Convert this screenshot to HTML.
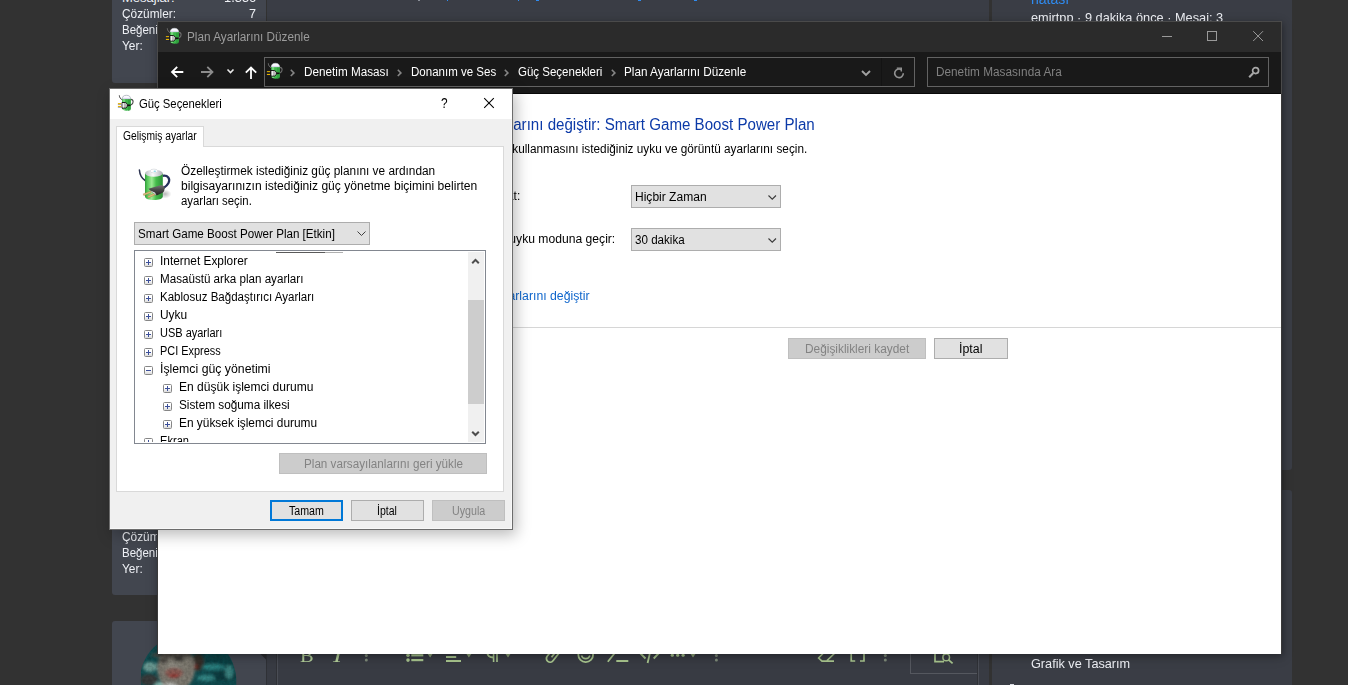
<!DOCTYPE html><html lang="tr"><head><meta charset="utf-8"><title>Plan Ayarlarını Düzenle</title><style>
*{box-sizing:border-box;margin:0;padding:0}
html,body{width:1348px;height:685px;overflow:hidden}
body{background:#323232;position:relative;font-family:"Liberation Sans",sans-serif;font-size:12px;color:#000}
.a{position:absolute}
.t{position:absolute;white-space:pre;line-height:1;transform-origin:0 50%}
svg{position:absolute;overflow:visible}
/* forum background */
.cell{background:#42464f}
.msg{background:#3a3d45}
/* window */
#win{left:157px;top:21px;width:1125px;height:633px;border:1px solid #4a4a4a;border-bottom:0;background:#fff;box-shadow:1px 2px 6px rgba(0,0,0,.26),0 3px 12px rgba(0,0,0,.16)}
#winl{left:157px;top:94px;width:1125px;height:560px;border-left:1px solid #3a3a3a;border-right:1px solid #3a3a3a}
#wtitle{left:158px;top:22px;width:1123px;height:30px;background:#2b2b2b}
#waddr{left:158px;top:52px;width:1123px;height:42px;background:#191919}
.abox{border:1px solid #626262;background:#191919}
/* dialog */
#dlg{left:109px;top:88px;width:404px;height:442px;border:1px solid rgba(0,0,0,.55);background:#f0f0f0;box-shadow:inset -1px -1px 0 #f8f8f8,3px 5px 14px rgba(0,0,0,.27)}
.btn{border:1px solid #adadad;background:#e1e1e1}
.btn.dis{border-color:#bfbfbf;background:#cccccc}
.combo{border:1px solid #adadad;background:#e1e1e1}
.pm{width:9px;height:9px;border:1px solid #868686;border-radius:1.500px;background:linear-gradient(180deg,#fff 40%,#dcdcdc)}
.pm i{position:absolute;left:1px;top:3px;width:5px;height:1px;background:#3c4f9a}
.pm b{position:absolute;left:3px;top:1px;width:1px;height:5px;background:#3c4f9a}
</style></head><body>
<div id="forum" aria-label="Forum sayfası">
<div class="a cell" style="left:112px;top:-20px;width:154px;height:103px;border-radius:0 0 0 3px"></div>
<div class="a msg" style="left:267px;top:-20px;width:722px;height:103px"></div>
<span class="t" style="left:122.00px;top:-9.00px;font-size:13px;color:#eef0f5;">Mesajlar:</span>
<span class="t" style="left:223.50px;top:-9.00px;font-size:13px;color:#eef0f5;transform:scaleX(0.9893);">1.356</span>
<span class="t" style="left:121.50px;top:7.00px;font-size:13px;color:#eef0f5;transform:scaleX(0.9114);">Çözümler:</span>
<span class="t" style="left:248.80px;top:7.00px;font-size:13px;color:#eef0f5;transform:scaleX(0.9676);">7</span>
<span class="t" style="left:121.50px;top:23.00px;font-size:13px;color:#eef0f5;transform:scaleX(0.8843);">Beğeni</span>
<span class="t" style="left:121.50px;top:39.00px;font-size:13px;color:#eef0f5;transform:scaleX(0.9137);">Yer:</span>
<div class="a" style="left:418px;top:0;width:2px;height:1px;background:#8a8f98"></div>
<div class="a" style="left:446.5px;top:0;width:1.5px;height:1px;background:#2f8bf0"></div>
<div class="a" style="left:517.5px;top:0;width:1.5px;height:1px;background:#2f8bf0"></div>
<div class="a" style="left:535.5px;top:0;width:3px;height:1px;background:#2f8bf0"></div>
<div class="a" style="left:637.5px;top:0;width:3px;height:1px;background:#2f8bf0"></div>
<div class="a" style="left:694px;top:0;width:3px;height:1px;background:#2f8bf0"></div>
<div class="a cell" style="left:112px;top:100px;width:154px;height:495px;border-radius:3px 0 0 3px"></div>
<span class="t" style="left:121.50px;top:530.00px;font-size:13px;color:#eef0f5;transform:scaleX(0.9114);">Çözümler:</span>
<span class="t" style="left:121.50px;top:546.00px;font-size:13px;color:#eef0f5;transform:scaleX(0.8843);">Beğeni</span>
<span class="t" style="left:121.50px;top:562.00px;font-size:13px;color:#eef0f5;transform:scaleX(0.9137);">Yer:</span>
<div class="a cell" style="left:112px;top:621px;width:154px;height:80px;border-radius:3px 0 0 0"></div>
<div class="a" style="left:266px;top:621px;width:723px;height:80px;background:#383b43;border-left:1px solid #2f3136"></div>
<div class="a" style="left:276px;top:621px;width:2px;height:80px;background:linear-gradient(90deg,#2f3136 50%,#4a4d55 50%)"></div>
<div class="a" style="left:977px;top:621px;width:2px;height:80px;background:linear-gradient(90deg,#2f3136 50%,#4a4d55 50%)"></div>
<svg class="a" style="left:260px;top:650px" width="6" height="10" viewBox="0 0 6 10"><path d="M0 3.500h6v6z" fill="#2b2c30"/></svg>
<svg class="a" style="left:141px;top:635px" width="96" height="96" viewBox="141 635 96 96"><defs><clipPath id="avc"><circle cx="188" cy="681.500" r="48.300"/></clipPath><filter id="avb" x="-20%" y="-20%" width="140%" height="140%"><feGaussianBlur stdDeviation="1.600"/></filter><filter id="avn"><feTurbulence type="fractalNoise" baseFrequency=".35" numOctaves="2" seed="4"/><feColorMatrix values="0 0 0 0 0  0 0 0 0 0  0 0 0 0 0  0 0 0 .28 0"/><feComposite in2="SourceGraphic" operator="in"/></filter></defs><g clip-path="url(#avc)"><rect x="141" y="635" width="96" height="96" fill="#125458"/><g filter="url(#avb)"><ellipse cx="218" cy="662" rx="16" ry="6" fill="#0b4a4d"/><ellipse cx="212" cy="667" rx="13" ry="3" fill="#2d8c8b"/><ellipse cx="224" cy="676" rx="12" ry="5" fill="#0a4144"/><ellipse cx="206" cy="678" rx="9" ry="3" fill="#3b9795"/><ellipse cx="229" cy="672" rx="4" ry="7" fill="#3f8f8c"/><ellipse cx="150" cy="667" rx="7" ry="5" fill="#76aaa3"/><ellipse cx="149" cy="680" rx="9" ry="6" fill="#3e4140"/><ellipse cx="160" cy="686" rx="6" ry="4" fill="#8fc5bc"/><ellipse cx="198" cy="662" rx="6" ry="9" fill="#3b362f"/><ellipse cx="176" cy="668" rx="19" ry="23" fill="#89857a"/><ellipse cx="172" cy="655" rx="21" ry="2.500" fill="#55504a"/><ellipse cx="174" cy="666" rx="8" ry="4" fill="#9a968b"/><ellipse cx="163" cy="660.500" rx="4.500" ry="1.800" fill="#35322e"/><ellipse cx="179" cy="659" rx="5" ry="1.800" fill="#2f2c29"/><ellipse cx="174" cy="673" rx="9" ry="5" fill="#96625a"/><ellipse cx="174" cy="676" rx="5" ry="1.500" fill="#a32a28"/><ellipse cx="196" cy="667" rx="1.500" ry="3" fill="#7a2a20"/><ellipse cx="170" cy="686" rx="8" ry="3" fill="#c9cbc6"/></g><rect x="141" y="635" width="96" height="96" filter="url(#avn)"/></g></svg>
<div class="a msg" style="left:992px;top:-20px;width:300px;height:490px;border-radius:0 0 3px 3px"></div>
<div class="a msg" style="left:992px;top:490px;width:300px;height:220px;border-radius:3px 3px 0 0"></div>
<span class="t" style="left:1031.00px;top:-7.85px;font-size:14px;color:#2f8bf0;transform:scaleX(1.0016);">hatası</span>
<span class="t" style="left:1031.00px;top:11.00px;font-size:13px;color:#eef0f5;transform:scaleX(0.9816);">emirtpp · 9 dakika önce · Mesaj: 3</span>
<div class="a" style="left:1010px;top:684px;width:4px;height:1px;background:#d8dbe2"></div>
<span class="t" style="left:1031.00px;top:657.00px;font-size:13px;color:#eef0f5;transform:scaleX(0.9761);">Grafik ve Tasarım</span>
<span class="t" style="left:300.30px;top:645.92px;font-size:19px;color:#b3cf9a;transform:scaleX(1.0719);font-family:'Liberation Serif',serif;">B</span>
<span class="t" style="left:332.60px;top:645.92px;font-size:19px;color:#b3cf9a;transform:scaleX(1.4222);font-family:'Liberation Serif',serif;font-style:italic;">I</span>
<svg class="a" style="left:0;top:640px" width="1348" height="45" viewBox="0 640 1348 45" fill="none" stroke="#a9c68f" stroke-width="1.800"><g stroke="none" fill="#7f8c7a"><circle cx="366.300" cy="655.500" r="1.500"/><circle cx="366.300" cy="659.900" r="1.500"/><circle cx="716.400" cy="655.500" r="1.500"/><circle cx="716.400" cy="659.900" r="1.500"/><circle cx="885.300" cy="655.500" r="1.500"/><circle cx="885.300" cy="659.900" r="1.500"/></g><g stroke="none" fill="#a9c68f"><circle cx="408" cy="655.300" r="1.800"/><circle cx="408" cy="660.100" r="1.800"/><rect x="411.300" y="654.200" width="12" height="2.200"/><rect x="411.300" y="659" width="12" height="2.200"/><rect x="446" y="656" width="10.200" height="2"/><rect x="446" y="660" width="15" height="2"/><path d="M426.600 652.500h7l-3.500 5zM465.400 652.500h7l-3.500 5zM504.500 652.500h7l-3.500 5zM689.500 652.500h7l-3.500 5z" fill="#8fa67a"/><circle cx="672.300" cy="655.200" r="1.600"/><circle cx="677.700" cy="655.200" r="1.600"/><circle cx="683.100" cy="655.200" r="1.600"/></g><path d="M493.600 650v12M497 650v12" stroke-width="1.600"/><path d="M493.600 657.500c-4 0-6.300-2-6.300-5.500" stroke-width="1.800"/><path d="M559.500 652.500l-6.500 8.300a3.700 3.700 0 0 1-5.800-4.600l3.500-4.400M551.500 657.200l3.600-4.600"/><circle cx="585.700" cy="654.700" r="7.400"/><path d="M581.500 655.500a4.400 4.400 0 0 0 8.400 0" stroke-width="1.600"/><path d="M607.800 661.800l8-10M616.300 661h12"/><path d="M639 652l6.500 6.500M647.600 663l2.800-12M659.500 652.500l-5.800 6"/><path d="M836 652l-9 8.500M818 657.500l4 3.700h12M818.500 658l5-5" stroke-width="1.700"/><path d="M855.200 661h-4v-9M860 661h4v-9" stroke-width="1.700"/><path d="M935 652v9.600h9" stroke-width="1.700"/><circle cx="946.200" cy="657.400" r="3.300" stroke-width="1.500"/><path d="M948.600 659.900l4 3.500" stroke-width="1.800"/></svg>
<div class="a" style="left:910px;top:640px;width:67px;height:34px;border:1px solid #55585f;border-top:0;border-right:0"></div>
</div>
<div id="explorer" role="application" aria-label="Plan Ayarlarını Düzenle">
<div class="a" id="win"></div><div class="a" id="winl"></div>
<div class="a" id="wtitle"></div>
<div class="a" id="waddr"></div>
<svg class="a" style="left:162px;top:24px" width="24" height="24" viewBox="0 0 24 24">
<path d="M5.300 4.300 C5.300 6.600 6.800 7.800 8.200 9" fill="none" stroke="#6e6e6e" stroke-width="1"/>
<path d="M16.800 8.400 C19.800 8.600 20 12.600 16.800 14" fill="none" stroke="#6e6e6e" stroke-width="1.100"/>
<path d="M8.100 7.500 H16.800 V17.300 C16.800 20.500 8.100 20.500 8.100 17.300 Z" fill="#3cb64a"/>
<rect x="9" y="8" width="2.200" height="11" fill="#86e08a" opacity=".75"/>
<path d="M14 8h2.800v10.500c0 .6-1.500 1.300-2.800 1.500z" fill="#2c9a3a" opacity=".7"/>
<path d="M8.400 7.800 C8.400 5.500 9.600 4.300 12.400 4.300 C15.200 4.300 16.500 5.500 16.500 7.800 Z" fill="#fbfbff" stroke="#cfd3da" stroke-width=".6"/>
<rect x="8.700" y="6.800" width="7.500" height=".9" fill="#e4dcfb"/>
<path d="M13.300 14.300 H16.600" stroke="#111" stroke-width="1.600"/>
<path d="M8 11.500 H11.600 L13.600 13.300 V15.300 L11.600 17.100 H8 Z" fill="#b9b9b9" stroke="#0c0c0c" stroke-width=".9"/>
<path d="M8.600 12.100 H10 V16.500 H8.600 Z" fill="#ededed"/>
<rect x="3.900" y="12.100" width="3.200" height="1.100" fill="#e6b400"/>
<rect x="3.900" y="14.900" width="3.200" height="1.100" fill="#e6b400"/>
<rect x="3.900" y="13.200" width="3.200" height=".5" fill="#1a2246" opacity=".7"/>
<rect x="3.900" y="16" width="3.200" height=".5" fill="#1a2246" opacity=".7"/>
</svg>
<span class="t" style="left:186.80px;top:30.84px;font-size:12px;color:#9c9c9c;transform:scaleX(0.9801);">Plan Ayarlarını Düzenle</span>
<svg class="a" style="left:1150px;top:22px" width="131" height="30" viewBox="0 0 131 30" fill="none" stroke="#9a9a9a" stroke-width="1"><path d="M12 14.5h10"/><rect x="57.5" y="9.5" width="9" height="9"/><path d="M103.200 9.200l9.800 9.800M113 9.200l-9.800 9.800"/></svg>
<svg class="a" style="left:158px;top:52px" width="110" height="41" viewBox="0 0 110 41" fill="none" stroke-width="1.8" stroke-linecap="butt"><path d="M25.300 20H14M19.200 14.800L14 20l5.200 5.200" stroke="#fff"/><path d="M43 20h11.500M49.300 14.800L54.500 20l-5.200 5.200" stroke="#8c8c8c"/><path d="M69.5 17.5l3 3 3-3" stroke="#e8e8e8" stroke-width="1.6"/><path d="M93 27V15.500M87.800 20.700L93 15.500l5.200 5.200" stroke="#fff"/></svg>
<div class="a abox" style="left:264px;top:57px;width:651px;height:30px"></div>
<div class="a" style="left:881px;top:58px;width:1px;height:28px;background:#131313"></div>
<svg class="a" style="left:263px;top:59px" width="24" height="24" viewBox="0 0 24 24">
<path d="M5.300 4.300 C5.300 6.600 6.800 7.800 8.200 9" fill="none" stroke="#6e6e6e" stroke-width="1"/>
<path d="M16.800 8.400 C19.800 8.600 20 12.600 16.800 14" fill="none" stroke="#6e6e6e" stroke-width="1.100"/>
<path d="M8.100 7.500 H16.800 V17.300 C16.800 20.500 8.100 20.500 8.100 17.300 Z" fill="#3cb64a"/>
<rect x="9" y="8" width="2.200" height="11" fill="#86e08a" opacity=".75"/>
<path d="M14 8h2.800v10.500c0 .6-1.500 1.300-2.800 1.500z" fill="#2c9a3a" opacity=".7"/>
<path d="M8.400 7.800 C8.400 5.500 9.600 4.300 12.400 4.300 C15.200 4.300 16.500 5.500 16.500 7.800 Z" fill="#fbfbff" stroke="#cfd3da" stroke-width=".6"/>
<rect x="8.700" y="6.800" width="7.500" height=".9" fill="#e4dcfb"/>
<path d="M13.300 14.300 H16.600" stroke="#111" stroke-width="1.600"/>
<path d="M8 11.500 H11.600 L13.600 13.300 V15.300 L11.600 17.100 H8 Z" fill="#b9b9b9" stroke="#0c0c0c" stroke-width=".9"/>
<path d="M8.600 12.100 H10 V16.500 H8.600 Z" fill="#ededed"/>
<rect x="3.900" y="12.100" width="3.200" height="1.100" fill="#e6b400"/>
<rect x="3.900" y="14.900" width="3.200" height="1.100" fill="#e6b400"/>
<rect x="3.900" y="13.200" width="3.200" height=".5" fill="#1a2246" opacity=".7"/>
<rect x="3.900" y="16" width="3.200" height=".5" fill="#1a2246" opacity=".7"/>
</svg>
<span class="t" style="left:303.80px;top:65.84px;font-size:12px;color:#fff;transform:scaleX(0.9769);">Denetim Masası</span>
<span class="t" style="left:410.50px;top:65.84px;font-size:12px;color:#fff;transform:scaleX(0.9603);">Donanım ve Ses</span>
<span class="t" style="left:517.50px;top:65.84px;font-size:12px;color:#fff;transform:scaleX(0.9586);">Güç Seçenekleri</span>
<span class="t" style="left:623.50px;top:65.84px;font-size:12px;color:#fff;transform:scaleX(0.9761);">Plan Ayarlarını Düzenle</span>
<svg class="a" style="left:289.5px;top:69px" width="5" height="8" viewBox="0 0 5 8"><path d="M.8.8L3.900 3.900 .8 7" fill="none" stroke="#858585" stroke-width="1.600"/></svg>
<svg class="a" style="left:396.5px;top:69px" width="5" height="8" viewBox="0 0 5 8"><path d="M.8.8L3.900 3.900 .8 7" fill="none" stroke="#858585" stroke-width="1.600"/></svg>
<svg class="a" style="left:503.5px;top:69px" width="5" height="8" viewBox="0 0 5 8"><path d="M.8.8L3.900 3.900 .8 7" fill="none" stroke="#858585" stroke-width="1.600"/></svg>
<svg class="a" style="left:610.5px;top:69px" width="5" height="8" viewBox="0 0 5 8"><path d="M.8.8L3.900 3.900 .8 7" fill="none" stroke="#858585" stroke-width="1.600"/></svg>
<svg class="a" style="left:861px;top:70px" width="10" height="7" viewBox="0 0 10 7"><path d="M1 1l4 4 4-4" fill="none" stroke="#a2a2a2" stroke-width="1.900"/></svg>
<svg class="a" style="left:893px;top:66px" width="12" height="13" viewBox="0 0 12 13" fill="none" stroke="#929292" stroke-width="1.600"><path d="M8.200 3.600A4.300 4.300 0 1 0 10.300 7.200"/><path d="M3.800 2.100H8.300V5.600" stroke-width="1.400"/></svg>
<div class="a abox" style="left:927px;top:57px;width:342px;height:30px"></div>
<span class="t" style="left:935.90px;top:65.84px;font-size:12px;color:#808080;transform:scaleX(0.9816);">Denetim Masasında Ara</span>
<svg class="a" style="left:1248px;top:66px" width="12" height="13" viewBox="0 0 12 13" fill="none" stroke="#a9a9a9" stroke-width="1.700"><circle cx="7.600" cy="4.600" r="3"/><path d="M5.300 7L1.200 11.300" stroke-width="2.100"/></svg>
<div class="a" style="left:158px;top:93px;width:1123px;height:1px;background:#080808"></div>
<span class="t" style="left:446.40px;top:117.46px;font-size:16px;color:#0c3aa8;transform:scaleX(0.9444);">Plan ayarlarını değiştir: Smart Game Boost Power Plan</span>
<span class="t" style="left:428.65px;top:142.84px;font-size:12px;color:#000;transform:scaleX(0.9828);">Bilgisayarınızın kullanmasını istediğiniz uyku ve görüntü ayarlarını seçin.</span>
<span class="t" style="left:450.00px;top:189.84px;font-size:12px;color:#000;transform:scaleX(0.9927);">Ekranı kapat:</span>
<span class="t" style="left:449.94px;top:232.84px;font-size:12px;color:#000;transform:scaleX(1.0112);">Bilgisayarı uyku moduna geçir:</span>
<div class="a combo" style="left:631px;top:185px;width:150px;height:23px"></div>
<div class="a combo" style="left:631px;top:228px;width:150px;height:23px"></div>
<span class="t" style="left:635.10px;top:190.84px;font-size:12px;color:#000;transform:scaleX(1.0034);">Hiçbir Zaman</span>
<span class="t" style="left:634.80px;top:233.84px;font-size:12px;color:#000;transform:scaleX(0.9674);">30 dakika</span>
<svg class="a" style="left:768px;top:194.5px" width="8.5" height="5.25" viewBox="0 0 8.5 5.25"><path d="M0.5 0.5 L4.25 4.25 L8.0 0.5" fill="none" stroke="#3c3c3c" stroke-width="1.15"/></svg>
<svg class="a" style="left:768px;top:237.5px" width="8.5" height="5.25" viewBox="0 0 8.5 5.25"><path d="M0.5 0.5 L4.25 4.25 L8.0 0.5" fill="none" stroke="#3c3c3c" stroke-width="1.15"/></svg>
<span class="t" style="left:421.99px;top:289.84px;font-size:12px;color:#0f66cc;transform:scaleX(1.0210);">Gelişmiş güç ayarlarını değiştir</span>
<div class="a" style="left:158px;top:327px;width:1123px;height:1px;background:#d6d6d6"></div>
<div class="a btn dis" style="left:788px;top:338px;width:138px;height:21px"></div>
<span class="t" style="left:805.00px;top:342.84px;font-size:12px;color:#838383;transform:scaleX(0.9888);">Değişiklikleri kaydet</span>
<div class="a btn" style="left:934px;top:338px;width:74px;height:21px"></div>
<span class="t" style="left:959.00px;top:342.84px;font-size:12px;color:#000;transform:scaleX(1.0314);">İptal</span>
</div>
<div id="power-dialog" role="dialog" aria-label="Güç Seçenekleri">
<div class="a" id="dlg"></div>
<div class="a" style="left:110px;top:89px;width:402px;height:30px;background:#fff"></div>
<svg class="a" style="left:114px;top:91px" width="24" height="24" viewBox="0 0 24 24">
<path d="M5.300 4.300 C5.300 6.600 6.800 7.800 8.200 9" fill="none" stroke="#4a4a4a" stroke-width="1"/>
<path d="M16.800 8.400 C19.800 8.600 20 12.600 16.800 14" fill="none" stroke="#4a4a4a" stroke-width="1.100"/>
<path d="M8.100 7.500 H16.800 V17.300 C16.800 20.500 8.100 20.500 8.100 17.300 Z" fill="#3cb64a"/>
<rect x="9" y="8" width="2.200" height="11" fill="#86e08a" opacity=".75"/>
<path d="M14 8h2.800v10.500c0 .6-1.500 1.300-2.800 1.500z" fill="#2c9a3a" opacity=".7"/>
<path d="M8.400 7.800 C8.400 5.500 9.600 4.300 12.400 4.300 C15.200 4.300 16.500 5.500 16.500 7.800 Z" fill="#fbfbff" stroke="#8e95a3" stroke-width=".6"/>
<rect x="8.700" y="6.800" width="7.500" height=".9" fill="#e4dcfb"/>
<path d="M13.300 14.300 H16.600" stroke="#111" stroke-width="1.600"/>
<path d="M8 11.500 H11.600 L13.600 13.300 V15.300 L11.600 17.100 H8 Z" fill="#b9b9b9" stroke="#0c0c0c" stroke-width=".9"/>
<path d="M8.600 12.100 H10 V16.500 H8.600 Z" fill="#ededed"/>
<rect x="3.900" y="12.100" width="3.200" height="1.100" fill="#e6b400"/>
<rect x="3.900" y="14.900" width="3.200" height="1.100" fill="#e6b400"/>
<rect x="3.900" y="13.200" width="3.200" height=".5" fill="#1a2246" opacity=".7"/>
<rect x="3.900" y="16" width="3.200" height=".5" fill="#1a2246" opacity=".7"/>
</svg>
<span class="t" style="left:139.20px;top:97.84px;font-size:12px;color:#000;transform:scaleX(0.9404);">Güç Seçenekleri</span>
<span class="t" style="left:441.00px;top:96.45px;font-size:14px;color:#000;transform:scaleX(0.8465);">?</span>
<svg class="a" style="left:484px;top:98px" width="10" height="10" viewBox="0 0 10 10"><path d="M.2.2l9.600 9.600M9.800.2L.2 9.800" fill="none" stroke="#000" stroke-width="1.050"/></svg>
<div class="a" style="left:116px;top:146px;width:388px;height:346px;border:1px solid #d9d9d9;background:#fff"></div>
<div class="a" style="left:116px;top:126px;width:88px;height:21px;border:1px solid #d9d9d9;border-bottom:0;background:#fff"></div>
<span class="t" style="left:123.10px;top:129.84px;font-size:12px;color:#000;transform:scaleX(0.8557);">Gelişmiş ayarlar</span>
<svg class="a" style="left:134px;top:164px" width="42" height="42" viewBox="0 0 42 42">
<defs>
<linearGradient id="bg1" x1="0" x2="1" y1="0" y2="0"><stop offset="0" stop-color="#2f9a3a"/><stop offset=".12" stop-color="#52c557"/><stop offset=".38" stop-color="#9bea93"/><stop offset=".62" stop-color="#45bd4c"/><stop offset="1" stop-color="#2a8f36"/></linearGradient>
<linearGradient id="pl1" x1="0" x2="0" y1="0" y2="1"><stop offset="0" stop-color="#767676"/><stop offset=".45" stop-color="#474747"/><stop offset="1" stop-color="#232323"/></linearGradient>
<linearGradient id="cp1" x1="0" x2="1" y1="0" y2="0"><stop offset="0" stop-color="#b9bdc2"/><stop offset=".45" stop-color="#fafbfc"/><stop offset="1" stop-color="#a9aeb5"/></linearGradient>
<radialGradient id="sh1"><stop offset="0" stop-color="#000" stop-opacity=".28"/><stop offset="1" stop-color="#000" stop-opacity="0"/></radialGradient>
</defs>
<ellipse cx="31" cy="30" rx="6.500" ry="4.500" fill="url(#sh1)"/>
<path d="M5.400 6 C5.800 11.500 8 14.500 11.200 16.500" fill="none" stroke="#2c3350" stroke-width="1.500" stroke-linecap="round"/>
<path d="M28.500 11.800 C34 10.800 36.500 15 34.500 19 C33.500 21 32 22.500 29.500 24" fill="none" stroke="#27305c" stroke-width="2.200"/>
<path d="M11 9.500 V32.500 C11 37.200 28.800 37.200 28.800 32.500 V9.500 Z" fill="url(#bg1)"/>
<ellipse cx="19.900" cy="9.300" rx="8.900" ry="3.500" fill="url(#cp1)"/>
<ellipse cx="19.900" cy="7" rx="3.800" ry="1.900" fill="#fdfdfe" stroke="#c3c8cf" stroke-width=".5"/>
<ellipse cx="20.800" cy="7.300" rx="1.300" ry=".700" fill="#8fd9e8"/>
<path d="M9.200 29.900 L16.600 27.100 L17.200 28.800 L9.800 31.600 Z" fill="#dcbc7c" stroke="#9a7a3c" stroke-width=".4"/>
<path d="M13.700 32.100 L20.500 29.300 L21.200 31 L14.400 33.800 Z" fill="#dcbc7c" stroke="#9a7a3c" stroke-width=".4"/>
<path d="M14.400 24.800 L26.500 21.300 Q29.600 20.600 30.700 23.600 L30.300 26.600 Q30 28.300 28 29.100 L22.600 31.500 L18 28 Z" fill="url(#pl1)"/>
<path d="M16.300 26.600 L18 28 L22.600 31.500 L21 28.600 Z" fill="#d8dadc"/>
</svg>
<span class="t" style="left:181.20px;top:164.84px;font-size:12px;color:#000;transform:scaleX(0.9873);">Özelleştirmek istediğiniz güç planını ve ardından</span>
<span class="t" style="left:181.20px;top:179.84px;font-size:12px;color:#000;transform:scaleX(1.0070);">bilgisayarınızın istediğiniz güç yönetme biçimini belirten</span>
<span class="t" style="left:181.20px;top:194.84px;font-size:12px;color:#000;transform:scaleX(0.9478);">ayarları seçin.</span>
<div class="a combo" style="left:134px;top:222px;width:236px;height:23px"></div>
<span class="t" style="left:137.80px;top:227.84px;font-size:12px;color:#000;transform:scaleX(0.9679);">Smart Game Boost Power Plan [Etkin]</span>
<svg class="a" style="left:356.5px;top:231px" width="9" height="5.5" viewBox="0 0 9 5.5"><path d="M0.5 0.5 L4.5 4.5 L8.5 0.5" fill="none" stroke="#404040" stroke-width="1"/></svg>
<div class="a" style="left:134px;top:250px;width:352px;height:194px;border:1px solid #828790;background:#fff;overflow:hidden"></div>
<div class="a" style="left:276px;top:252px;width:49px;height:1px;background:#5a5a5a"></div>
<div class="a" style="left:325px;top:252px;width:18px;height:1px;background:#b0b0b0"></div>
<div class="a pm" style="left:144px;top:258px"><i></i><b></b></div>
<span class="t" style="left:159.90px;top:254.84px;font-size:12px;color:#000;transform:scaleX(0.9885);">Internet Explorer</span>
<div class="a pm" style="left:144px;top:276px"><i></i><b></b></div>
<span class="t" style="left:159.90px;top:272.84px;font-size:12px;color:#000;transform:scaleX(0.9684);">Masaüstü arka plan ayarları</span>
<div class="a pm" style="left:144px;top:294px"><i></i><b></b></div>
<span class="t" style="left:159.90px;top:290.84px;font-size:12px;color:#000;transform:scaleX(0.9612);">Kablosuz Bağdaştırıcı Ayarları</span>
<div class="a pm" style="left:144px;top:312px"><i></i><b></b></div>
<span class="t" style="left:159.90px;top:308.84px;font-size:12px;color:#000;transform:scaleX(0.9947);">Uyku</span>
<div class="a pm" style="left:144px;top:330px"><i></i><b></b></div>
<span class="t" style="left:159.90px;top:326.84px;font-size:12px;color:#000;transform:scaleX(0.9158);">USB ayarları</span>
<div class="a pm" style="left:144px;top:348px"><i></i><b></b></div>
<span class="t" style="left:159.90px;top:344.84px;font-size:12px;color:#000;transform:scaleX(0.9087);">PCI Express</span>
<div class="a pm" style="left:144px;top:366px"><i></i></div>
<span class="t" style="left:159.90px;top:362.84px;font-size:12px;color:#000;transform:scaleX(1.0236);">İşlemci güç yönetimi</span>
<div class="a pm" style="left:163px;top:384px"><i></i><b></b></div>
<span class="t" style="left:178.80px;top:380.84px;font-size:12px;color:#000;transform:scaleX(1.0025);">En düşük işlemci durumu</span>
<div class="a pm" style="left:163px;top:402px"><i></i><b></b></div>
<span class="t" style="left:178.80px;top:398.84px;font-size:12px;color:#000;transform:scaleX(0.9821);">Sistem soğuma ilkesi</span>
<div class="a pm" style="left:163px;top:420px"><i></i><b></b></div>
<span class="t" style="left:178.80px;top:416.84px;font-size:12px;color:#000;transform:scaleX(0.9907);">En yüksek işlemci durumu</span>
<div class="a" style="left:135px;top:430px;width:333px;height:12px;overflow:hidden"><div class="a pm" style="left:9px;top:8px"><i></i><b></b></div><span class="t" style="left:24.90px;top:4.84px;font-size:12px;color:#000;transform:scaleX(0.9248);">Ekran</span></div>
<div class="a" style="left:468px;top:252px;width:16px;height:190px;background:#f0f0f0"></div>
<div class="a" style="left:468px;top:300px;width:15.500px;height:104px;background:#cdcdcd"></div>
<svg class="a" style="left:471px;top:257px" width="9" height="8" viewBox="0 0 9 8"><path d="M1.200 6.200L4.500 2.900l3.300 3.300" fill="none" stroke="#4d4d4d" stroke-width="2"/></svg>
<svg class="a" style="left:471px;top:430px" width="9" height="8" viewBox="0 0 9 8"><path d="M1.200 1.700L4.500 5l3.300-3.300" fill="none" stroke="#4d4d4d" stroke-width="2"/></svg>
<div class="a btn dis" style="left:279px;top:453px;width:208px;height:21px"></div>
<span class="t" style="left:303.80px;top:457.84px;font-size:12px;color:#838383;transform:scaleX(0.9729);">Plan varsayılanlarını geri yükle</span>
<div class="a btn" style="left:270px;top:500px;width:73px;height:21px;border:2px solid #0078d7"></div>
<span class="t" style="left:289.20px;top:504.84px;font-size:12px;color:#000;transform:scaleX(0.8871);">Tamam</span>
<div class="a btn" style="left:351px;top:500px;width:73px;height:21px"></div>
<span class="t" style="left:377.10px;top:504.84px;font-size:12px;color:#000;transform:scaleX(0.8771);">İptal</span>
<div class="a btn dis" style="left:432px;top:500px;width:73px;height:21px"></div>
<span class="t" style="left:451.80px;top:504.84px;font-size:12px;color:#838383;transform:scaleX(0.8913);">Uygula</span>
</div>
</body></html>
